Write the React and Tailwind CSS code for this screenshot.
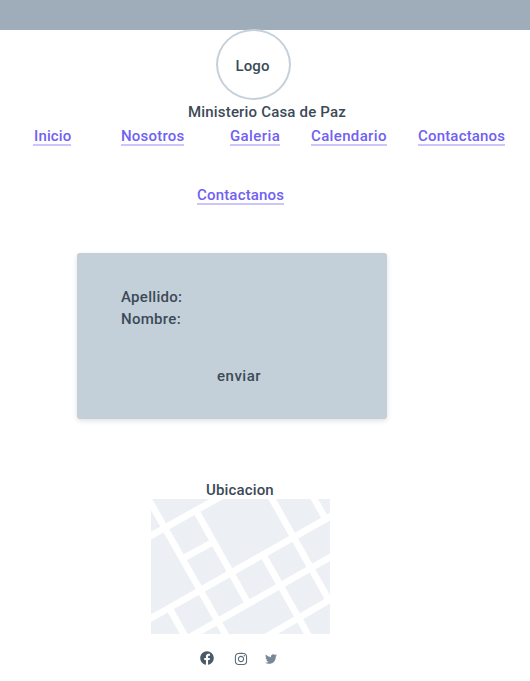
import React from "react";
import { FaFacebook, FaInstagram, FaTwitter } from "react-icons/fa";

const links = [
  { label: "Inicio", place: "ml-[33px] w-[38px] pl-px tracking-[0.15px]" },
  { label: "Nosotros", place: "ml-[50px] w-[63px] tracking-[0.22px]" },
  { label: "Galeria", place: "ml-[46px] w-[50px] tracking-[0.4px]" },
  { label: "Calendario", place: "ml-[31px] w-[76px] tracking-[0.35px]" },
  { label: "Contactanos", place: "ml-[31px] w-[87px] tracking-[0.18px]" },
];

function Link({ label, place }) {
  return (
    <a
      href="#"
      className={`block h-5 shrink-0 whitespace-nowrap border-b-2 border-[#cbc5fc] text-[#7061f2] ${place}`}
    >
      {label}
    </a>
  );
}

function StreetMap() {
  return (
    <svg
      className="ml-[151px] block h-[135px] w-[179px] bg-[#ecf0f5]"
      viewBox="33 72 538 405"
      preserveAspectRatio="none"
      fill="none"
      stroke="#fff"
      strokeWidth="20"
    >
      <path d="M20 189L260 55M20 437L590 114M150 486L590 236M380 485L590 363M135 247L216 203" />
      <path d="M20 63L262 488M170 110L325 385M91 405L138 488M372 243L510 488M388 56L566 372M515 56L557 131" />
    </svg>
  );
}

export default function App() {
  return (
    <main className="h-[681px] w-[530px] overflow-hidden bg-white font-['Roboto',sans-serif] text-[15px] leading-5 font-medium tracking-[0.3px] text-[#3c4a57]">
      <header>
        <div className="h-[30px] bg-[#9eadb9]" />
        <div className="-mt-px ml-[216px] flex h-[71px] w-[75px] items-center justify-center rounded-[50%] border-2 border-[#c5d1da] pt-[2px] pr-[2px] tracking-[0.1px]">
          Logo
        </div>
        <h1 className="mt-[2px] ml-[188px] whitespace-nowrap tracking-[0.18px]">
          Ministerio Casa de Paz
        </h1>
        <nav className="mt-1 flex">
          {links.map((l) => (
            <Link key={l.label} {...l} />
          ))}
        </nav>
      </header>
      <div className="mt-[39px] flex">
        <Link label="Contactanos" place="ml-[197px] w-[87px] tracking-[0.18px]" />
      </div>
      <form className="mt-[48px] ml-[77px] h-[166px] w-[310px] rounded-[3px] bg-[#c4d0d9] pt-[34px] pl-[44px] shadow-[0_2px_5px_rgba(0,0,0,0.12)]">
        <label className="block">Apellido:</label>
        <label className="mt-[2px] block">Nombre:</label>
        <button type="button" className="mt-[37px] ml-[96px] block tracking-[0.5px]">
          enviar
        </button>
      </form>
      <section>
        <h2 className="mt-[60px] ml-[206px] h-5 leading-[22px] tracking-[0.15px]">Ubicacion</h2>
        <StreetMap />
      </section>
      <footer className="mt-[16px] ml-[200px] flex items-center">
        <FaFacebook className="size-[14px] text-[#4a5a68]" />
        <FaInstagram className="mt-[2px] ml-[20px] size-[14px] text-[#5c6b78]" />
        <FaTwitter className="mt-[2px] ml-[17px] size-[12px] text-[#778899]" />
      </footer>
    </main>
  );
}
